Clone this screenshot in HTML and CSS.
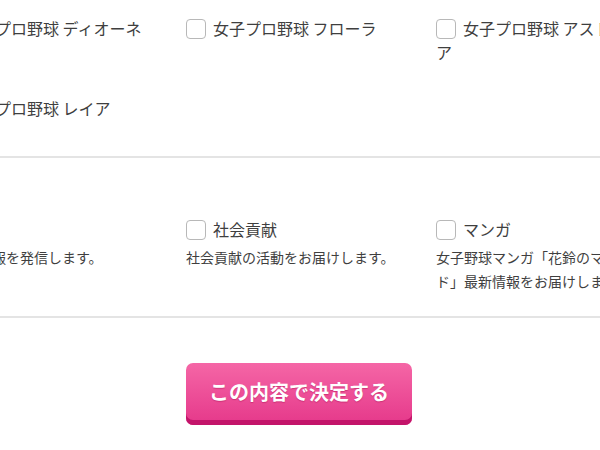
FILE: index.html
```html
<!DOCTYPE html>
<html lang="ja">
<head>
<meta charset="utf-8">
<link rel="stylesheet" href="styles.css">
</head>
<body>
<div class="page">
  <section class="group group-teams">
    <div class="grid">
      <label class="item"><span class="box"></span>女子プロ野球 ディオーネ</label>
      <label class="item"><span class="box"></span>女子プロ野球 フローラ</label>
      <label class="item"><span class="box"></span>女子プロ野球 アストライア</label>
      <label class="item"><span class="box"></span>女子プロ野球 レイア</label>
    </div>
  </section>
  <section class="group group-topics">
    <div class="grid">
      <div class="item">
        <label class="check"><span class="box"></span>試合</label>
        <p class="desc">試合の情報を発信します。</p>
      </div>
      <div class="item">
        <label class="check"><span class="box"></span>社会貢献</label>
        <p class="desc">社会貢献の活動をお届けします。</p>
      </div>
      <div class="item">
        <label class="check"><span class="box"></span>マンガ</label>
        <p class="desc">女子野球マンガ「花鈴のマウンド」最新情報をお届けします。</p>
      </div>
    </div>
  </section>
  <div class="actions">
    <button class="submit" type="button">この内容で決定する</button>
  </div>
</div>
</body>
</html>
```

FILE: styles.css
```css
html, body {
  margin: 0;
  padding: 0;
  background: #ffffff;
  overflow: hidden;
}
body {
  font-family: "Noto Sans CJK JP", "Noto Sans", sans-serif;
  color: #3f3f3f;
  font-size: 16px;
  line-height: 24px;
}
.page {
  width: 750px;
  margin-left: -64px;
}
.group {
  border-bottom: 2px solid #e4e4e4;
}
.group-teams {
  padding: 16px 0 36px;
}
.group-topics {
  padding: 59px 0 23px;
}
.grid {
  display: grid;
  grid-template-columns: repeat(3, 250px);
  row-gap: 32px;
}
.item {
  display: block;
  width: 210px;
}
.box {
  display: inline-block;
  box-sizing: border-box;
  width: 20px;
  height: 20px;
  border: 1px solid #b8b8b8;
  border-radius: 4px;
  background: #fff;
  vertical-align: -4px;
  margin-right: 7px;
}
.check {
  display: block;
}
.desc {
  margin: 4px 0 0;
  font-size: 14px;
  line-height: 24px;
}
.actions {
  padding-top: 45px;
  padding-left: 250px;
}
.submit {
  width: 226px;
  height: 62px;
  border: 0;
  border-radius: 7px;
  background: linear-gradient(#f566a6, #e5388a);
  box-shadow: inset 0 -5px 0 #c3146a;
  color: #fff;
  font-family: "Noto Sans CJK JP", sans-serif;
  font-weight: bold;
  font-size: 20px;
  padding: 0 0 5px;
  text-shadow: 0 1px 1px rgba(150, 0, 60, 0.35);
  cursor: pointer;
}
```
